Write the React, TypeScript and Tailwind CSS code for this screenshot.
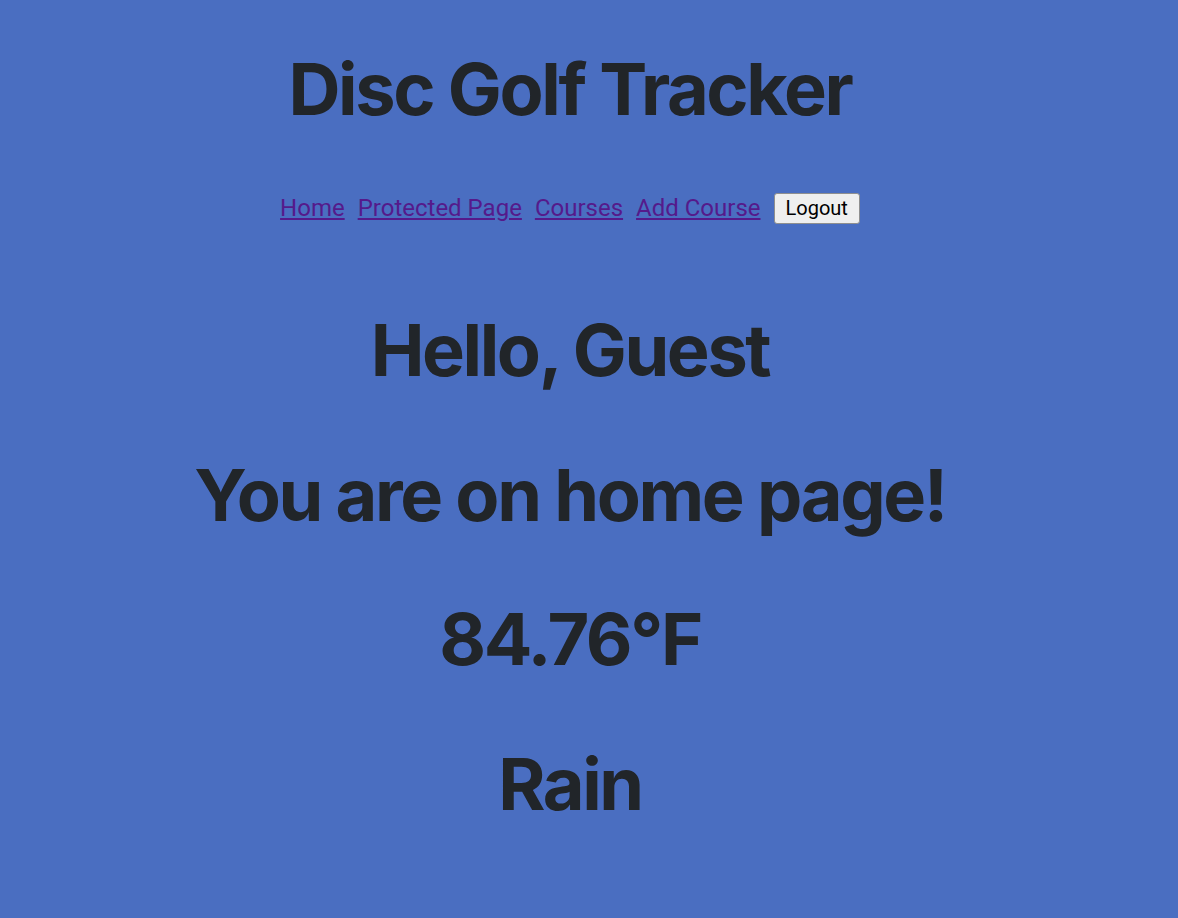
import React from 'react';

const links = ['Home', 'Protected Page', 'Courses', 'Add Course'];

export default function App() {
  return (
    <div className="min-h-[918px] bg-[#4a6ec1] text-[#212529] font-['Inter',sans-serif]">
      <div className="w-[1140px] flex flex-col items-center text-center pt-[46px]">
        <h1 className="text-[72px] font-bold leading-[1.2] tracking-[-0.033em]">Disc Golf Tracker</h1>
        <nav className="mt-[58px] flex items-center gap-[13px] font-['Roboto',sans-serif] text-[24px]">
          {links.map((l) => (
            <a key={l} href="#" className="text-[#551a8b] underline">
              {l}
            </a>
          ))}
          <button className="h-[31px] px-[11px] bg-[#efefef] border border-[#8f8f8f] rounded-[3px] text-black text-[20px] leading-none">
            Logout
          </button>
        </nav>
        <div className="mt-[81px] flex flex-col gap-[58px]">
          <h1 className="text-[72px] font-bold leading-[1.2] tracking-[-0.033em]">Hello, Guest</h1>
          <h1 className="text-[72px] font-bold leading-[1.2] tracking-[-0.033em]">You are on home page!</h1>
          <h1 className="text-[72px] font-bold leading-[1.2] tracking-[-0.033em]">84.76°F</h1>
          <h1 className="text-[72px] font-bold leading-[1.2] tracking-[-0.033em]">Rain</h1>
        </div>
      </div>
    </div>
  );
}
